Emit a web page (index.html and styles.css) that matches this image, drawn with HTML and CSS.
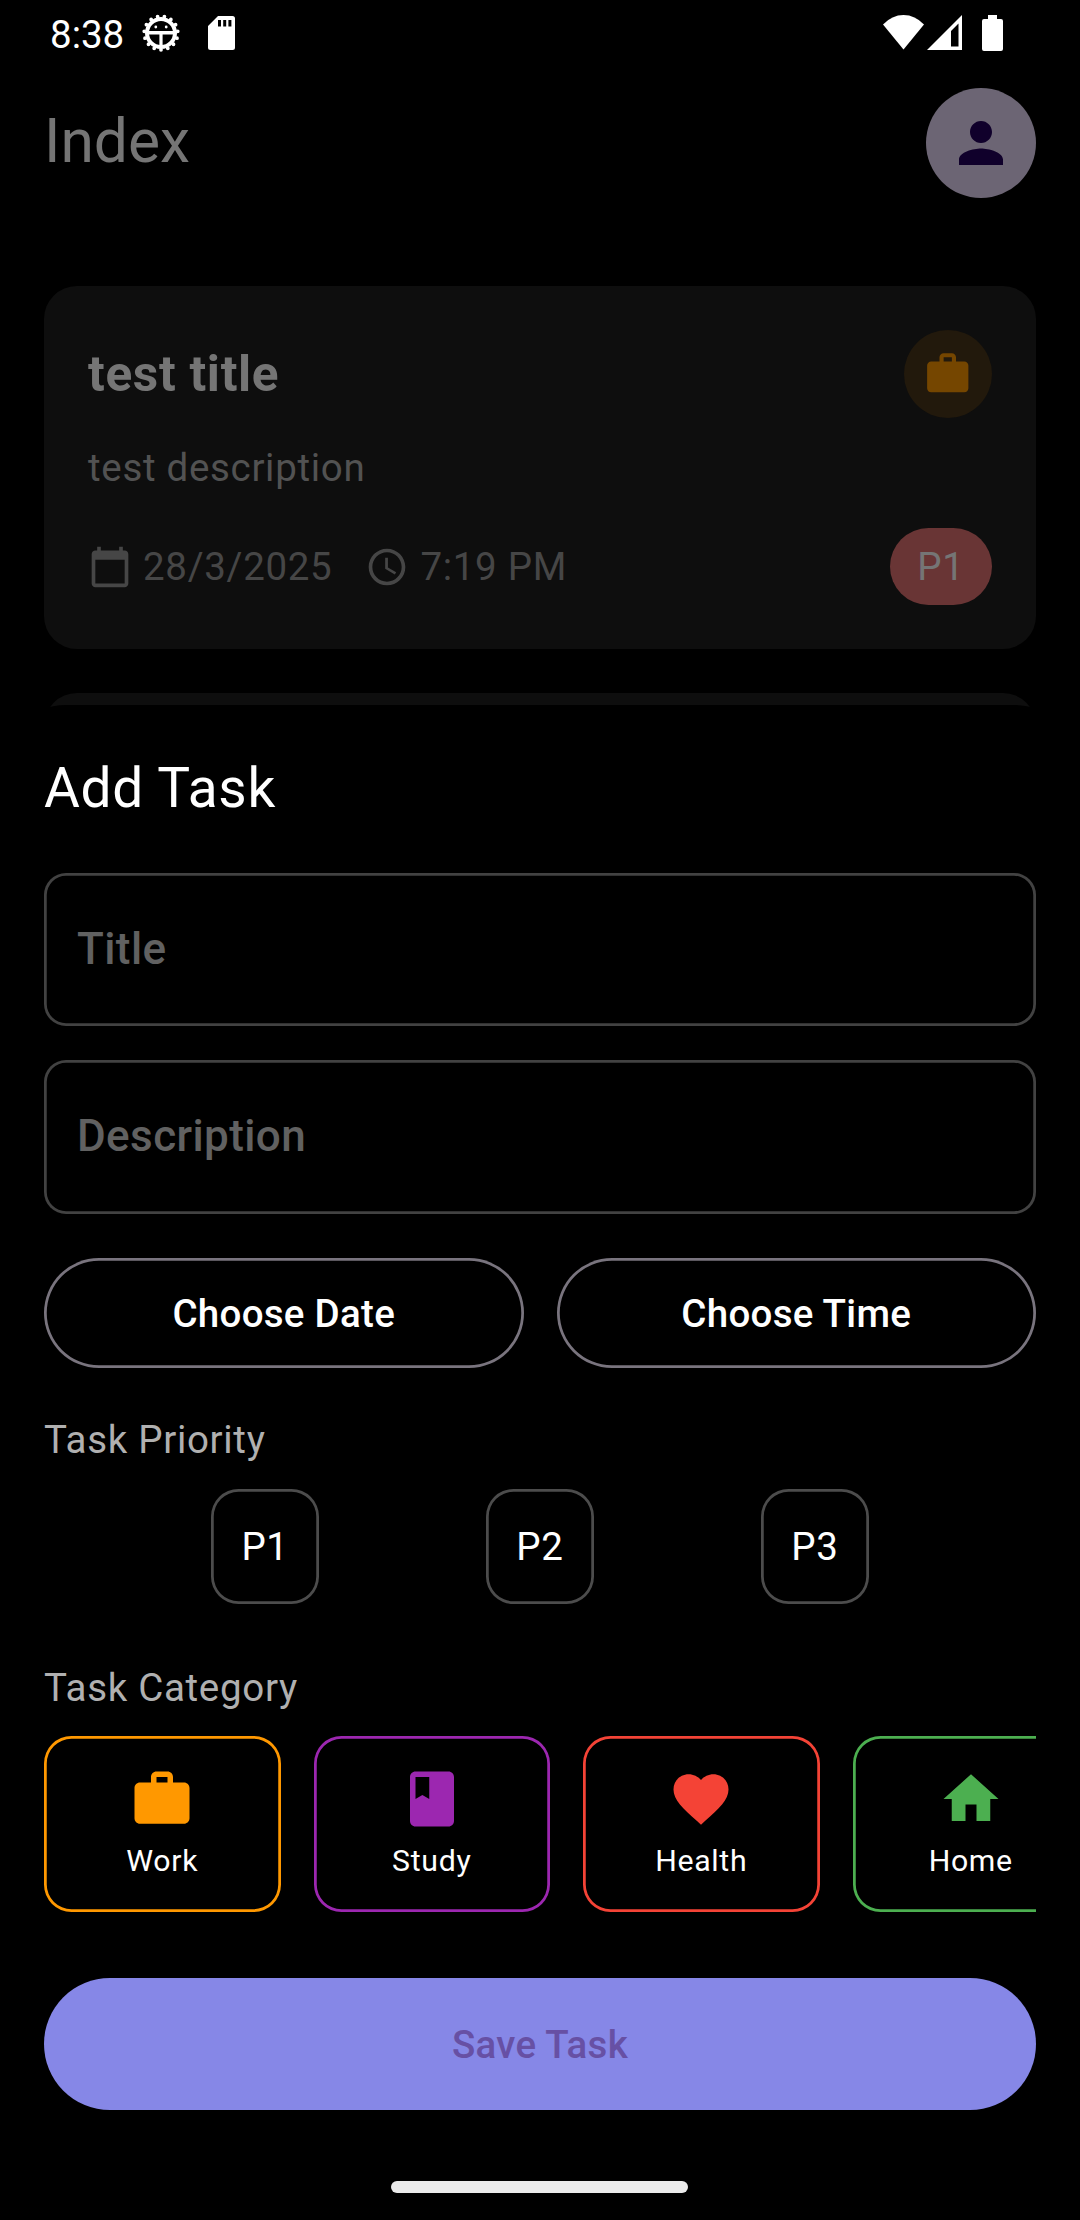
FILE: index.html
```html
<!DOCTYPE html>
<html lang="en">
<head>
<meta charset="utf-8">
<title>Index</title>
<link rel="stylesheet" href="styles.css">
</head>
<body>
<div class="screen">
  <div class="home">
    <div class="status-bar">
      <span class="clock">8:38</span>
      <svg class="gear" viewBox="-20 -20 40 40">
        <circle r="14" fill="none" stroke="#fff" stroke-width="4"/>
        <circle r="16.8" fill="none" stroke="#fff" stroke-width="3.8" stroke-linecap="round" pathLength="15" stroke-dasharray="0 1" transform="rotate(90)"/>
        <path d="M-14-2H14V1.500H1.600V14H-1.600V1.500H-14z" fill="#fff"/>
        <circle cx="-5.200" cy="-6" r="1.400" fill="#fff"/>
        <circle cx="5.200" cy="-6" r="1.400" fill="#fff"/>
      </svg>
      <svg class="sd" viewBox="0 0 27 34"><path fill="#fff" fill-rule="evenodd" d="M10 0H24.500q2.500 0 2.500 2.500V31.500q0 2.500-2.500 2.500H2.500q-2.500 0-2.500-2.500V10zM10 4v6.500h3V4zM15.200 4v6.500h3V4zM20.400 4v6.500h3V4z"/></svg>
      <span class="spacer"></span>
      <svg class="wifi" viewBox="0 0 41 35"><path fill="#fff" d="M0 9.500Q9 0 20.500 0T41 9.500L20.500 34.500z"/></svg>
      <svg class="signal" viewBox="0 0 35 35"><path fill="#fff" fill-rule="evenodd" d="M35 0V35H0zM31.500 8.500L24 16V31.500h7.500z"/></svg>
      <svg class="battery" viewBox="0 0 21 36"><path fill="#fff" d="M6 0h9v4h4q2 0 2 2v28q0 2-2 2H2q-2 0-2-2V6q0-2 2-2h4z"/></svg>
    </div>
    <header class="app-bar">
      <h1>Index</h1>
      <div class="avatar"><svg viewBox="0 0 24 24"><path d="M12 12c2.210 0 4-1.790 4-4s-1.790-4-4-4-4 1.790-4 4 1.790 4 4 4zm0 2c-2.670 0-8 1.340-8 4v2h16v-2c0-2.660-5.330-4-8-4z"/></svg></div>
    </header>
    <div class="task-list">
      <article class="task">
        <div class="task-head">
          <h2>test title</h2>
          <div class="task-icon"><svg viewBox="0 0 24 24"><path d="M20 6h-4V4c0-1.110-.89-2-2-2h-4c-1.110 0-2 .89-2 2v2H4c-1.110 0-2 .89-2 2v11c0 1.110.89 2 2 2h16c1.110 0 2-.89 2-2V8c0-1.110-.89-2-2-2zm-6 0h-4V4h4v2z"/></svg></div>
        </div>
        <p class="task-text">test description</p>
        <div class="task-meta">
          <svg viewBox="0 0 24 24"><path d="M20 3h-1V1h-2v2H7V1H5v2H4c-1.100 0-2 .9-2 2v16c0 1.100.9 2 2 2h16c1.100 0 2-.9 2-2V5c0-1.100-.9-2-2-2zm0 18H4V8h16v13z"/></svg>
          <span class="date">28/3/2025</span>
          <svg viewBox="0 0 24 24"><path d="M11.990 2C6.470 2 2 6.480 2 12s4.470 10 9.990 10C17.520 22 22 17.520 22 12S17.520 2 11.990 2zM12 20c-4.420 0-8-3.580-8-8s3.580-8 8-8 8 3.580 8 8-3.580 8-8 8zm.5-13H11v6l5.250 3.150.75-1.230-4.500-2.670z"/></svg>
          <span>7:19 PM</span>
          <span class="badge">P1</span>
        </div>
      </article>
      <article class="task"></article>
    </div>
  </div>

  <section class="sheet">
    <h2>Add Task</h2>
    <div class="field">Title</div>
    <div class="field">Description</div>
    <div class="pickers">
      <div class="picker">Choose Date</div>
      <div class="picker">Choose Time</div>
    </div>
    <div class="label">Task Priority</div>
    <div class="priorities">
      <div class="priority">P1</div>
      <div class="priority">P2</div>
      <div class="priority">P3</div>
    </div>
    <div class="label label-category">Task Category</div>
    <div class="categories">
      <div class="category work"><svg viewBox="0 0 24 24"><path d="M20 6h-4V4c0-1.110-.89-2-2-2h-4c-1.110 0-2 .89-2 2v2H4c-1.110 0-2 .89-2 2v11c0 1.110.89 2 2 2h16c1.110 0 2-.89 2-2V8c0-1.110-.89-2-2-2zm-6 0h-4V4h4v2z"/></svg><span>Work</span></div>
      <div class="category study"><svg viewBox="0 0 24 24"><path d="M18 2H6c-1.100 0-2 .9-2 2v16c0 1.100.9 2 2 2h12c1.100 0 2-.9 2-2V4c0-1.100-.9-2-2-2zM6 4h5v8l-2.500-1.500L6 12V4z"/></svg><span>Study</span></div>
      <div class="category health"><svg viewBox="0 0 24 24"><path d="M12 21.350l-1.450-1.320C5.400 15.360 2 12.280 2 8.500 2 5.420 4.420 3 7.500 3c1.740 0 3.410.81 4.500 2.090C13.090 3.810 14.760 3 16.500 3 19.580 3 22 5.420 22 8.500c0 3.780-3.400 6.860-8.550 11.540L12 21.350z"/></svg><span>Health</span></div>
      <div class="category house"><svg viewBox="0 0 24 24"><path d="M10 20v-6h4v6h5v-8h3L12 3 2 12h3v8z"/></svg><span>Home</span></div>
    </div>
    <div class="save">Save Task</div>
  </section>
  <div class="nav-handle"></div>
</div>
</body>
</html>
```
FILE: styles.css
```css
* { box-sizing: border-box; margin: 0; padding: 0; }

body { background: #000; }

.screen {
  position: relative;
  width: 1080px;
  height: 2220px;
  overflow: hidden;
  background: #000;
  color: #fff;
  font-family: Roboto, sans-serif;
  font-size: 38.5px;
  font-weight: 400;
  line-height: 55px;
}

svg { display: block; flex: none; }
path { fill: currentColor; }

/* Dimmed task list behind the sheet */
.home { height: 782px; overflow: hidden; }

.status-bar {
  display: flex;
  height: 66px;
  padding: 0 77px 0 50px;
}
.clock { line-height: 70px; }
.gear { width: 40px; height: 40px; margin: 13px 0 0 17px; }
.sd { width: 27px; height: 34px; margin: 16px 0 0 27px; }
.spacer { flex: 1; }
.wifi { width: 41px; height: 35px; margin-top: 15px; }
.signal { width: 35px; height: 35px; margin: 15px 0 0 3px; }
.battery { width: 21px; height: 36px; margin: 15px 0 0 20px; }

.app-bar {
  display: flex;
  align-items: center;
  justify-content: space-between;
  height: 110px;
  margin: 22px 44px 88px;
}
.app-bar h1 {
  font-size: 60.5px;
  font-weight: 400;
  line-height: 77px;
  padding-bottom: 3px;
  color: #757575;
}
.avatar {
  display: grid;
  place-items: center;
  width: 110px;
  height: 110px;
  border-radius: 50%;
  background: #6c6574;
  color: #10002b;
}
.avatar svg { width: 66px; height: 66px; }

.task-list {
  display: flex;
  flex-direction: column;
  gap: 44px;
  padding: 0 44px;
}
.task {
  min-height: 200px;
  padding: 44px;
  border-radius: 33px;
  background: #0e0e0e;
}
.task-head {
  display: flex;
  align-items: center;
  justify-content: space-between;
}
.task-head h2 {
  font-size: 49.5px;
  font-weight: 700;
  letter-spacing: 0.69px;
  color: #757575;
}
.task-icon {
  display: grid;
  place-items: center;
  width: 88px;
  height: 88px;
  border-radius: 50%;
  background: #22190c;
  color: #754600;
}
.task-icon svg { width: 49.5px; height: 49.5px; }
.task-text { margin-top: 22px; letter-spacing: 0.69px; color: #525252; }
.task-meta {
  display: flex;
  align-items: center;
  margin-top: 33px;
  letter-spacing: 0.69px;
  color: #464646;
}
.task-meta svg { width: 44px; height: 44px; margin-right: 11px; }
.date { margin-right: 33px; }
.badge {
  margin-left: auto;
  padding: 11px 27.5px;
  border-radius: 38.5px;
  background: #693535;
  color: #757575;
}

/* Add-task bottom sheet */
.sheet {
  position: relative;
  height: 1515.25px;
  margin-top: -77.25px;
  padding: 45px 44px 0;
  border-radius: 66px 66px 0 0;
  background: #000;
}
.sheet h2 {
  margin-bottom: 46px;
  font-size: 55px;
  font-weight: 400;
  line-height: 77px;
  letter-spacing: 0.69px;
}
.field {
  height: 153.5px;
  margin-bottom: 34px;
  padding: 0 33px;
  border-radius: 22px;
  box-shadow: inset 0 0 0 2.75px #424242;
  font-size: 44px;
  font-weight: 500;
  line-height: 153px;
  letter-spacing: 0.4px;
  color: #616161;
}
.pickers { display: flex; gap: 33px; margin: 44px 0; }
.picker {
  flex: 1;
  height: 110px;
  border-radius: 55px;
  box-shadow: inset 0 0 0 2.75px #79747e;
  font-weight: 500;
  line-height: 111px;
  letter-spacing: 0.275px;
  text-align: center;
}
.label {
  margin-bottom: 21px;
  line-height: 56px;
  letter-spacing: 0.69px;
  color: #b0b0b0;
}
.priorities { display: flex; justify-content: space-evenly; }
.priority {
  padding: 30.25px;
  border-radius: 27.5px;
  box-shadow: inset 0 0 0 2.75px #4c4c4c;
  letter-spacing: 0.69px;
}
.label-category { margin-top: 56px; margin-bottom: 20px; }
.categories { display: flex; gap: 33px; overflow: hidden; }
.category {
  display: flex;
  flex: none;
  flex-direction: column;
  align-items: center;
  gap: 6px;
  width: 236.5px;
  height: 176px;
  padding-top: 29.25px;
  border-radius: 27.5px;
  box-shadow: inset 0 0 0 2.75px currentColor;
}
.category svg { width: 66px; height: 66px; }
.category span {
  font-size: 30.25px;
  line-height: 46px;
  letter-spacing: 0.69px;
  color: #fff;
}
.work { color: #ff9800; }
.study { color: #9c27b0; }
.health { color: #f44336; }
.house { color: #4caf50; }
.save {
  height: 132px;
  margin-top: 66px;
  border-radius: 66px;
  background: #8687e7;
  font-weight: 500;
  line-height: 133px;
  letter-spacing: 0.275px;
  text-align: center;
  color: #6750a4;
}

.nav-handle {
  position: absolute;
  left: 391px;
  top: 2181px;
  width: 297px;
  height: 12px;
  border-radius: 6px;
  background: #ebebeb;
}
```
